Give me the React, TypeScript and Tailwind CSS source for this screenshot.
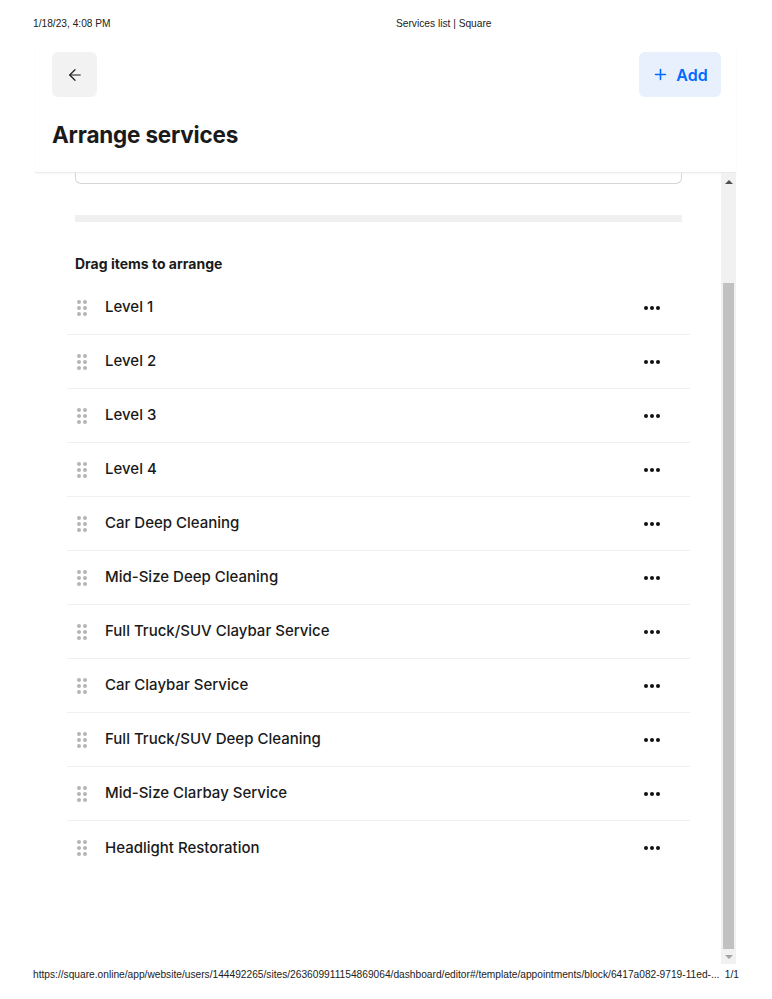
import { ArrowLeft, Plus } from "lucide-react";

const services = [
  "Level 1",
  "Level 2",
  "Level 3",
  "Level 4",
  "Car Deep Cleaning",
  "Mid-Size Deep Cleaning",
  "Full Truck/SUV Claybar Service",
  "Car Claybar Service",
  "Full Truck/SUV Deep Cleaning",
  "Mid-Size Clarbay Service",
  "Headlight Restoration",
];

function DragHandle() {
  return (
    <div className="grid grid-cols-2 gap-x-[2.5px] gap-y-[2px] w-[10px]">
      {[...Array(6)].map((_, i) => (
        <span key={i} className="block w-[4px] h-[4px] rounded-full bg-[#b5b5b5]" />
      ))}
    </div>
  );
}

function MoreDots() {
  return (
    <div className="flex gap-[2px] items-center">
      <span className="block w-[4px] h-[4px] rounded-full bg-[#111]" />
      <span className="block w-[4px] h-[4px] rounded-full bg-[#111]" />
      <span className="block w-[4px] h-[4px] rounded-full bg-[#111]" />
    </div>
  );
}

export default function App() {
  return (
    <div className="w-[772px] h-[999px] bg-white flex flex-col font-['Inter',sans-serif] text-[#1a1a1a] overflow-hidden">
      {/* print header */}
      <div className="h-[48px] pt-[17px] px-[33px] flex text-[10.2px] leading-[13px] font-['Liberation_Sans',Arial,sans-serif] text-[#222] whitespace-nowrap">
        <span className="w-[363px]">1/18/23, 4:08 PM</span>
        <span>Services list | Square</span>
      </div>

      {/* sticky header */}
      <div className="ml-[35px] w-[701px] pt-[4px] pb-[22px] pl-[17px] pr-[15px] border-b border-[#ececec] shadow-[0_1px_2px_rgba(0,0,0,0.04)]">
        <div className="flex items-center justify-between">
          <button className="w-[45px] h-[45px] rounded-md bg-[#f2f2f2] flex items-center justify-center">
            <ArrowLeft size={18} strokeWidth={1.6} className="text-[#1a1a1a]" />
          </button>
          <button className="w-[82px] h-[45px] rounded-md bg-[#e8f0fe] flex items-center justify-center gap-[7px] text-[#006aff]">
            <Plus size={17} strokeWidth={2.2} />
            <span className="text-[16px] font-semibold">Add</span>
          </button>
        </div>
        <h1 className="mt-[23px] text-[22.5px] leading-[30px] font-bold tracking-[-0.2px]">Arrange services</h1>
      </div>

      {/* scroll area */}
      <div className="ml-[35px] w-[701px] h-[791px] flex">
        <div className="flex-1 pl-[32px] pr-[31px]">
          <div className="mx-[8px] h-[11px] border border-t-0 border-[#d6d6d6] rounded-b-md" />
          <div className="mx-[8px] mt-[31px] h-[7px] bg-[#f0f0f0]" />
          <div className="mx-[8px] mt-[32px] text-[14px] leading-[20px] font-bold">Drag items to arrange</div>
          <div className="mt-[7px] flex flex-col">
            {services.map((name, i) => (
              <div
                key={name}
                className={`h-[54px] flex items-center pl-[10px] pr-[30px] ${
                  i < services.length - 1 ? "border-b border-[#efefef]" : ""
                }`}
              >
                <DragHandle />
                <span className="ml-[18px] flex-1 text-[15px] font-medium">{name}</span>
                <MoreDots />
              </div>
            ))}
          </div>
        </div>
        {/* scrollbar */}
        <div className="w-[15px] bg-[#f1f1f1] flex flex-col items-center">
          <div className="h-[18px] flex items-center justify-center">
            <span className="block w-0 h-0 border-l-[4px] border-r-[4px] border-b-[4px] border-l-transparent border-r-transparent border-b-[#505050]" />
          </div>
          <div className="mt-[92px] w-[11px] h-[666px] bg-[#c1c1c1]" />
          <div className="mt-[2px] h-[12px] flex items-center justify-center">
            <span className="block w-0 h-0 border-l-[4px] border-r-[4px] border-t-[4px] border-l-transparent border-r-transparent border-t-[#a3a3a3]" />
          </div>
        </div>
      </div>

      {/* print footer */}
      <div className="pt-[4px] px-[33px] flex justify-between text-[10.2px] leading-[13px] font-['Liberation_Sans',Arial,sans-serif] text-[#222] whitespace-nowrap">
        <span>
          https://square.online/app/website/users/144492265/sites/263609911154869064/dashboard/editor#/template/appointments/block/6417a082-9719-11ed-...
        </span>
        <span>1/1</span>
      </div>
    </div>
  );
}
